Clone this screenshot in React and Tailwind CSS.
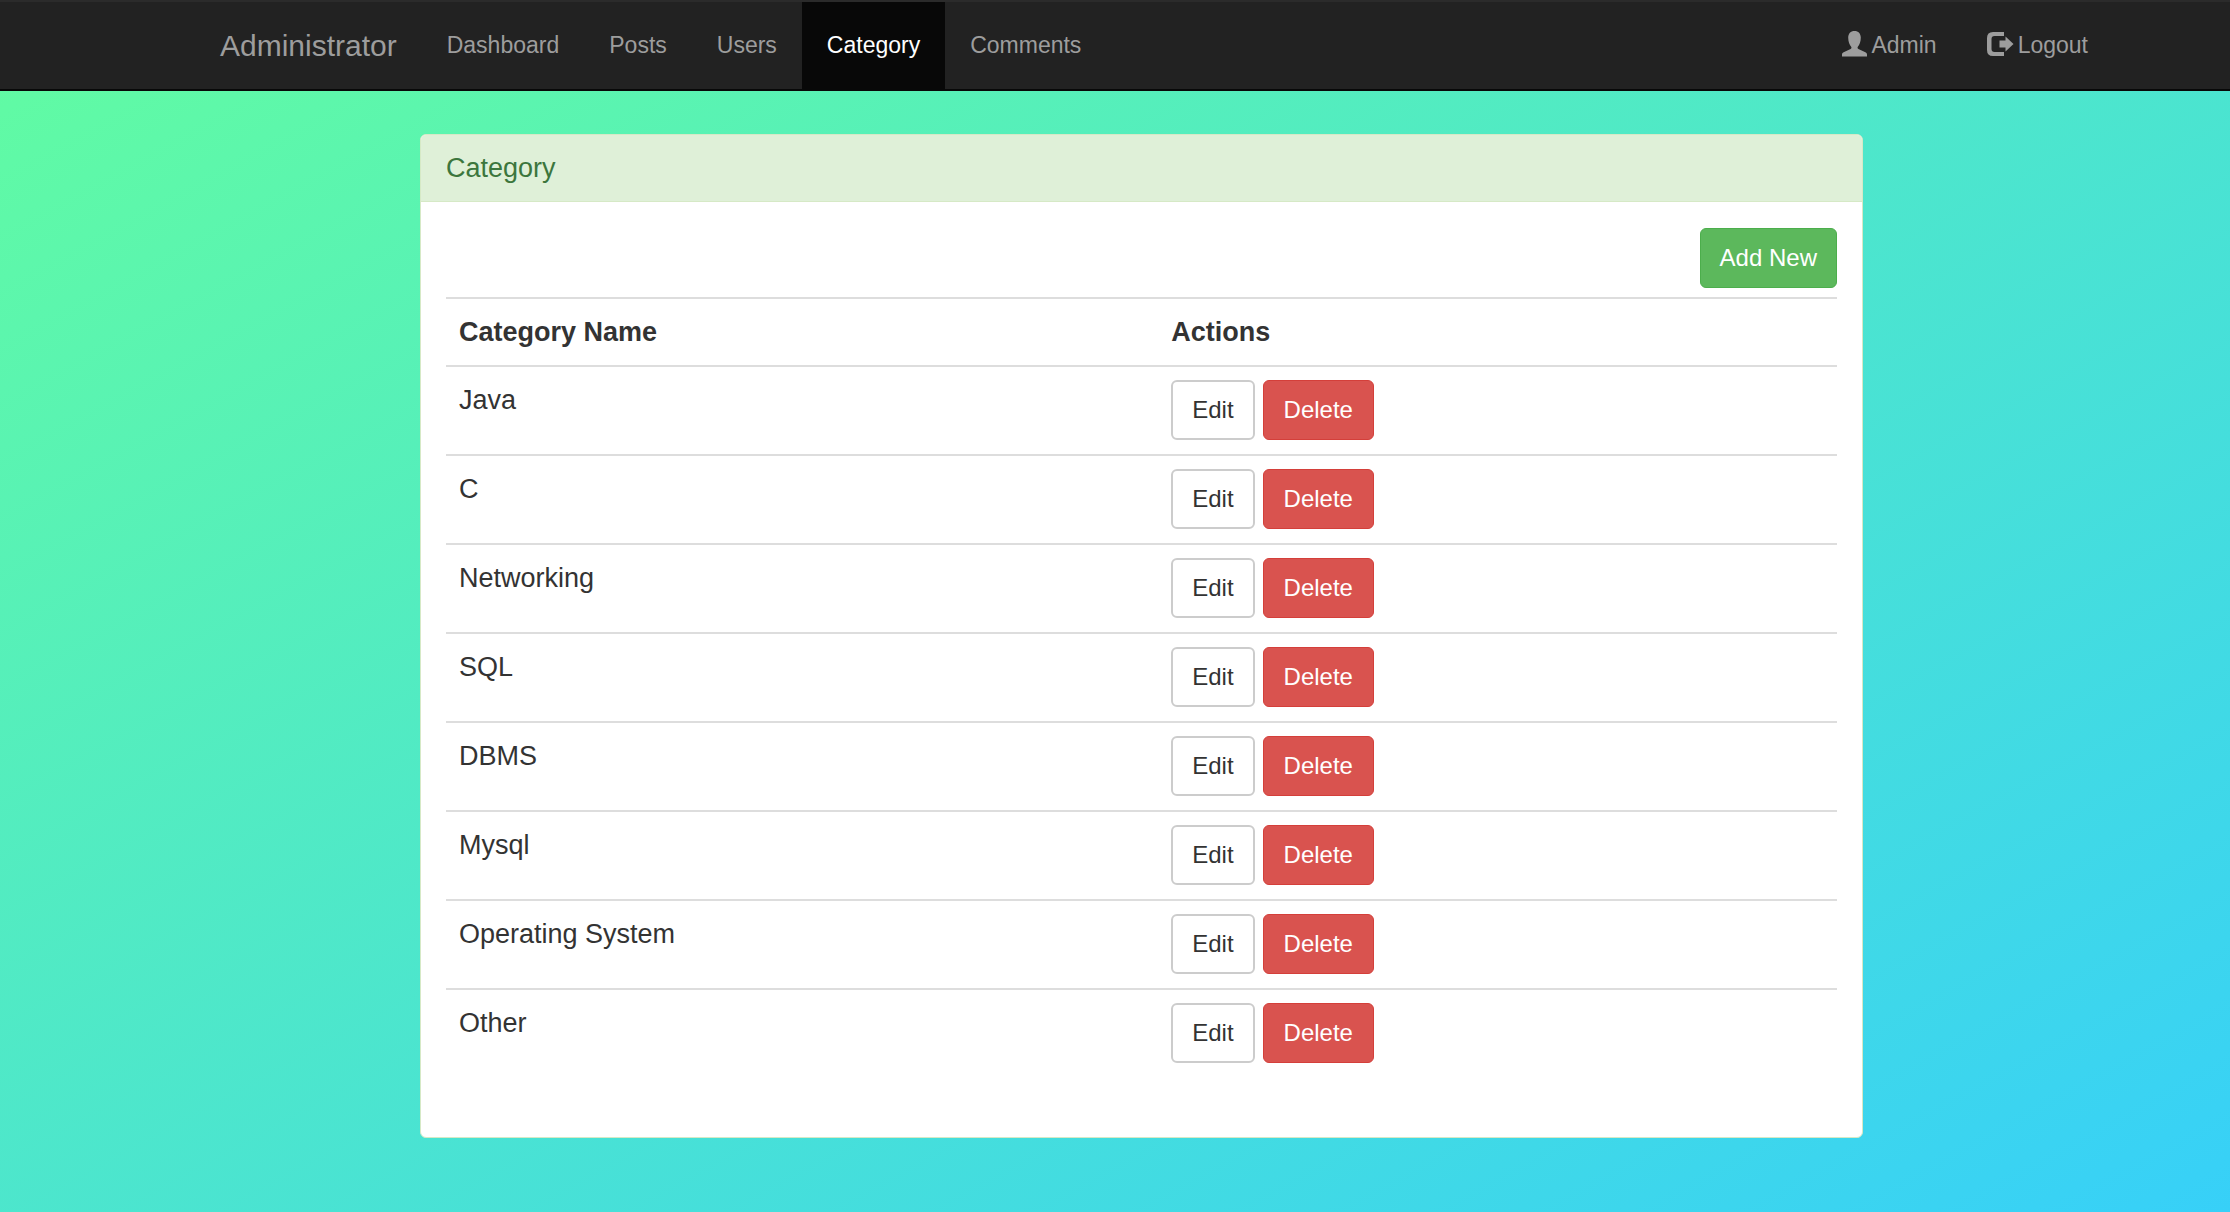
const categories = ['Java', 'C', 'Networking', 'SQL', 'DBMS', 'Mysql', 'Operating System', 'Other'];

const links = ['Dashboard', 'Posts', 'Users', 'Category', 'Comments'];

function UserIcon() {
  return (
    <svg className="mb-1 h-[26px] w-[25px] shrink-0" viewBox="0 0 25 26" fill="currentColor" aria-hidden="true">
      <path d="M12.5 0C8.6 0 6.2 2.6 6.2 6.6C6.2 10.6 7.6 14.2 9 15.6C9.8 16.5 9.5 17.6 8.6 18L1.6 21.2C.5 21.8 0 22.4 0 23.6V25.5H25V23.6C25 22.4 24.5 21.8 23.4 21.2L16.4 18C15.5 17.6 15.2 16.5 16 15.6C17.4 14.2 18.8 10.6 18.8 6.6C18.8 2.6 16.4 0 12.5 0Z" />
    </svg>
  );
}

function LogoutIcon() {
  return (
    <svg className="mb-1 h-[26px] w-[27px] shrink-0" viewBox="0 0 27 26" fill="currentColor" aria-hidden="true">
      <path d="M17 1V5H7.500Q4.500 5 4.500 8V18Q4.500 21 7.500 21H17V25H6Q0 25 0 19V7Q0 1 6 1Z" />
      <path d="M12.500 9.500H18.500V5.500L26.500 13L18.500 20.500V16.500H12.500Z" />
    </svg>
  );
}

export default function App() {
  return (
    <div className="min-h-screen bg-[linear-gradient(to_bottom_right,#62fca1,#37d0f8)] pb-16 font-['Liberation_Sans',Arial,sans-serif] text-[#333333]">
      <nav className="flex justify-between border-y-2 border-t-[#2b2b2b] border-b-[#080808] bg-[#222222] pr-[117px] pl-[195px] text-[23px] leading-[87px] text-[#9d9d9d]">
        <div className="flex">
          <a href="#" className="px-[25px] text-[30px]">Administrator</a>
          {links.map((link) => (
            <a
              key={link}
              href="#"
              className={link === 'Category' ? 'bg-[#080808] px-[25px] text-white' : 'px-[25px]'}
            >
              {link}
            </a>
          ))}
        </div>
        <div className="flex">
          <a href="#" className="flex items-center gap-1 px-[25px]">
            <UserIcon />
            Admin
          </a>
          <a href="#" className="flex items-center gap-1 px-[25px]">
            <LogoutIcon />
            Logout
          </a>
        </div>
      </nav>

      <main className="mt-[43px] pr-[367px] pl-[420px] text-[27px] leading-[38px]">
        <section className="rounded-md border border-[#d6e9c6] bg-white">
          <h1 className="rounded-t-[5px] border-b border-[#d6e9c6] bg-[#dff0d8] px-[25px] py-[14px] text-[#3c763d]">
            Category
          </h1>
          <div className="px-[25px] pt-[26px] pb-[60px]">
            <div className="flex justify-end pb-[9px]">
              <button className="h-[60px] rounded-md border border-[#4cae4c] bg-[#5cb85c] px-[19px] text-[24px] text-white">
                Add New
              </button>
            </div>
            <table className="w-full table-fixed text-left">
              <thead>
                <tr className="border-t-2 border-[#dddddd]">
                  <th className="w-[51.2%] px-[13px] py-[14px]">Category Name</th>
                  <th className="px-[13px] py-[14px]">Actions</th>
                </tr>
              </thead>
              <tbody>
                {categories.map((name) => (
                  <tr key={name} className="border-t-2 border-[#dddddd] align-top">
                    <td className="px-[13px] py-[14px]">{name}</td>
                    <td className="px-[13px] pt-[13px] pb-[14px]">
                      <div className="flex gap-2 text-[24px]">
                        <button className="h-[60px] rounded-md border-2 border-[#cccccc] bg-white px-[19px]">
                          Edit
                        </button>
                        <button className="h-[60px] rounded-md border border-[#d43f3a] bg-[#d9534f] px-[20px] text-white">
                          Delete
                        </button>
                      </div>
                    </td>
                  </tr>
                ))}
              </tbody>
            </table>
          </div>
        </section>
      </main>
    </div>
  );
}
